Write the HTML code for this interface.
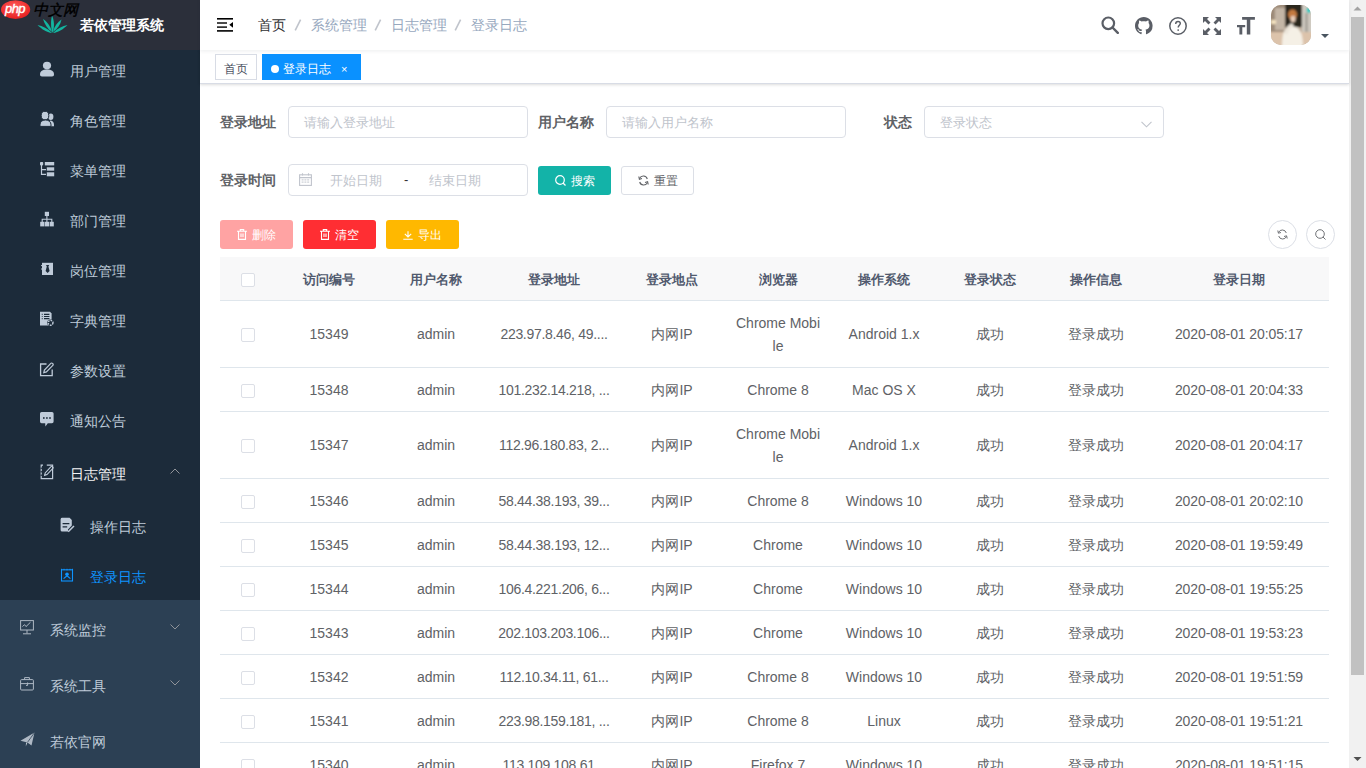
<!DOCTYPE html>
<html><head><meta charset="utf-8">
<style>
*{box-sizing:border-box;margin:0;padding:0}
html,body{width:1366px;height:768px;overflow:hidden;background:#fff;font-family:"Liberation Sans",sans-serif;}
.abs{position:absolute}
/* sidebar */
#side{position:absolute;left:0;top:0;width:200px;height:768px;background:#2c4054;overflow:hidden}
#sub{position:absolute;left:0;top:45px;width:200px;height:555px;background:#1c2b3a}
.mi{position:absolute;left:0;width:200px;color:#bfcbd9;font-size:14px;white-space:nowrap}
.mi .t{position:absolute;top:1px}
.mi svg{position:absolute}
#logo{position:absolute;left:0;top:0;width:200px;height:50px;background:#2b2f3a}
#logo .title{position:absolute;left:80px;top:0;line-height:50px;color:#fff;font-weight:bold;font-size:14px}
/* navbar */
#nav{position:absolute;z-index:2;left:200px;top:0;width:1149px;height:50px;background:#fff;box-shadow:0 1px 4px rgba(0,21,41,.08)}
.bc{position:absolute;top:0;line-height:50px;font-size:14px;color:#97a8be}
.sep{position:absolute;top:0;line-height:50px;font-size:14px;color:#c0c4cc;font-weight:bold}
#tags{position:absolute;z-index:1;left:200px;top:50px;width:1149px;height:34px;background:#fff;border-bottom:1px solid #d8dce5;box-shadow:0 1px 3px 0 rgba(0,0,0,.12),0 0 3px 0 rgba(0,0,0,.04)}
.tag{position:absolute;top:4px;height:26px;line-height:28px;border:1px solid #d8dce5;color:#495060;background:#fff;font-size:12px;padding:0 8px}
.tag.act{background:#0a91ff;border-color:#0a91ff;color:#fff}
/* form */
.lbl{position:absolute;font-size:14px;font-weight:bold;color:#606266;line-height:36px;white-space:nowrap}
.inp{position:absolute;height:32px;border:1px solid #dcdfe6;border-radius:4px;background:#fff;font-size:13px;color:#c0c4cc;line-height:32px;white-space:nowrap}
.btn{position:absolute;height:29px;border-radius:3px;font-size:12px;line-height:30px;white-space:nowrap;color:#fff}
/* table */
#tbl{position:absolute;left:220px;top:257px;width:1109px}
.row{position:absolute;left:0;width:1109px;border-bottom:1px solid #dfe6ec}
.hdr{background:#f8f8f9;color:#515a6e;font-size:13px;font-weight:bold}
.c{position:absolute;top:1px;text-align:center;font-size:14px;color:#606266;white-space:nowrap}
.hdr .c{color:#515a6e;font-size:13px}
.cb{position:absolute;width:14px;height:14px;border:1px solid #dcdfe6;border-radius:2px;background:#fff}
/* scrollbar */
#sb{position:absolute;left:1349px;top:0;width:17px;height:768px;background:#f1f1f1}
</style></head><body>

<div id="side">
  <div id="sub"></div>
<div class="mi" style="top:45px;height:50px;line-height:50px;color:#bfcbd9"><span class="t" style="left:70px">用户管理</span></div>
<div class="mi" style="top:95px;height:50px;line-height:50px;color:#bfcbd9"><span class="t" style="left:70px">角色管理</span></div>
<div class="mi" style="top:145px;height:50px;line-height:50px;color:#bfcbd9"><span class="t" style="left:70px">菜单管理</span></div>
<div class="mi" style="top:195px;height:50px;line-height:50px;color:#bfcbd9"><span class="t" style="left:70px">部门管理</span></div>
<div class="mi" style="top:245px;height:50px;line-height:50px;color:#bfcbd9"><span class="t" style="left:70px">岗位管理</span></div>
<div class="mi" style="top:295px;height:50px;line-height:50px;color:#bfcbd9"><span class="t" style="left:70px">字典管理</span></div>
<div class="mi" style="top:345px;height:50px;line-height:50px;color:#bfcbd9"><span class="t" style="left:70px">参数设置</span></div>
<div class="mi" style="top:395px;height:50px;line-height:50px;color:#bfcbd9"><span class="t" style="left:70px">通知公告</span></div>
<div class="mi" style="top:445px;height:56px;line-height:56px;color:#f4f4f5"><span class="t" style="left:70px">日志管理</span><svg style="left:170px;top:23px" width="10" height="6" viewBox="0 0 10 6"><path d="M0.5 5.5 L5 1 L9.5 5.5" stroke="#909399" stroke-width="1" fill="none"/></svg></div>
<div class="mi" style="top:501px;height:50px;line-height:50px;color:#bfcbd9"><span class="t" style="left:90px">操作日志</span></div>
<div class="mi" style="top:551px;height:50px;line-height:50px;color:#0e94ff"><span class="t" style="left:90px">登录日志</span></div>
<div class="mi" style="top:601px;height:56px;line-height:56px;color:#bfcbd9"><span class="t" style="left:50px">系统监控</span><svg style="left:170px;top:23px" width="10" height="6" viewBox="0 0 10 6"><path d="M0.5 0.5 L5 5 L9.5 0.5" stroke="#909399" stroke-width="1" fill="none"/></svg></div>
<div class="mi" style="top:657px;height:56px;line-height:56px;color:#bfcbd9"><span class="t" style="left:50px">系统工具</span><svg style="left:170px;top:23px" width="10" height="6" viewBox="0 0 10 6"><path d="M0.5 0.5 L5 5 L9.5 0.5" stroke="#909399" stroke-width="1" fill="none"/></svg></div>
<div class="mi" style="top:713px;height:56px;line-height:56px;color:#bfcbd9"><span class="t" style="left:50px">若依官网</span></div>
<svg class="abs" style="left:40px;top:61px" width="15" height="16" viewBox="0 0 15 16"><ellipse cx="7" cy="4.6" rx="4.1" ry="3.8" fill="#bfcbd9"/><path d="M0 13.6 C0 10.4 2.5 8.6 7 8.6 C11.5 8.6 14 10.4 14 13.6 C14 15 13.3 15.4 12 15.4 H2 C0.7 15.4 0 15 0 13.6 Z" fill="#bfcbd9"/></svg>
<svg class="abs" style="left:40px;top:111px" width="15" height="16" viewBox="0 0 15 16"><ellipse cx="10.8" cy="5.8" rx="2.6" ry="3.2" fill="#bfcbd9"/><path d="M10 9.6 C12.6 9.6 14 11.4 14 13.8 V15.2 H10 Z" fill="#bfcbd9"/><ellipse cx="5" cy="4.6" rx="3.8" ry="4.3" stroke="#1c2b3a" stroke-width="1" fill="#bfcbd9"/><path d="M0 13.8 C0 11 1.8 9 5.4 9 C9 9 11 11 11 13.8 V15.4 H0 Z" stroke="#1c2b3a" stroke-width="1" fill="#bfcbd9"/></svg>
<svg class="abs" style="left:40px;top:161px" width="15" height="16" viewBox="0 0 15 16"><rect x="0" y="1" width="3.2" height="3.4" rx="0.8" fill="#bfcbd9"/><path d="M1.5 4 V13.3 H6 M1.5 8.6 H6" stroke="#bfcbd9" stroke-width="1.2" fill="none"/><rect x="4.8" y="1" width="9.4" height="3.4" fill="#bfcbd9"/><rect x="6.8" y="6.3" width="7.4" height="3.4" fill="#bfcbd9"/><rect x="6.8" y="11.3" width="7.4" height="4" fill="#bfcbd9"/></svg>
<svg class="abs" style="left:40px;top:211px" width="15" height="16" viewBox="0 0 15 16"><rect x="4.8" y="0.8" width="4.2" height="4.2" fill="#bfcbd9"/><path d="M6.9 5 V8 M2.2 11 V8.2 H11.8 V11 M6.9 8 V11" stroke="#bfcbd9" stroke-width="1.1" fill="none"/><rect x="0.2" y="10.8" width="4.2" height="4.6" fill="#bfcbd9"/><rect x="4.8" y="10.8" width="4.2" height="4.6" fill="#bfcbd9"/><rect x="9.6" y="10.8" width="4.2" height="4.6" fill="#bfcbd9"/></svg>
<svg class="abs" style="left:40px;top:262px" width="15" height="15" viewBox="0 0 15 15"><rect x="2" y="0.8" width="11" height="12.2" fill="#bfcbd9"/><path d="M1 3.6 H3 M1 7 H3" stroke="#bfcbd9" stroke-width="1" /><path d="M6 3 H9.2 L8.4 4.6 L9.6 9 L7.6 11 L5.6 9 L6.8 4.6 Z" fill="#1c2b3a"/></svg>
<svg class="abs" style="left:39px;top:311px" width="16" height="16" viewBox="0 0 16 16"><path d="M1 0.8 H11 L12.6 2.4 V14.4 H1 Z" fill="#bfcbd9"/><path d="M2.8 3.4 H3.6 M5 3.4 H10.4 M2.8 5.5 H3.6 M5 5.5 H10.4 M2.8 7.6 H3.6 M5 7.6 H10.4" stroke="#1c2b3a" stroke-width="1.1"/><circle cx="11.6" cy="11.8" r="3.3" fill="#1c2b3a"/><circle cx="11.6" cy="11.8" r="2.4" fill="none" stroke="#bfcbd9" stroke-width="1.4" stroke-dasharray="1.6 0.9"/></svg>
<svg class="abs" style="left:39px;top:362px" width="16" height="16" viewBox="0 0 16 16"><path d="M7.5 2 H1.6 V13.6 H13.2 V7.6" stroke="#bfcbd9" stroke-width="1.3" fill="none"/><path d="M4.8 10.6 L5.4 8 L11.8 1.4 A1 1 0 0 1 13.4 1.4 L13.8 1.8 A1 1 0 0 1 13.8 3.4 L7.4 9.9 Z" stroke="#bfcbd9" stroke-width="1.2" fill="none"/></svg>
<svg class="abs" style="left:39px;top:411px" width="16" height="16" viewBox="0 0 16 16"><path d="M2.6 1 H13 A1.6 1.6 0 0 1 14.6 2.6 V10.6 A1.6 1.6 0 0 1 13 12.2 H8.8 L6.4 15.4 L6.2 12.2 H2.6 A1.6 1.6 0 0 1 1 10.6 V2.6 A1.6 1.6 0 0 1 2.6 1 Z" fill="#bfcbd9"/><rect x="4" y="6.2" width="1.6" height="1.6" fill="#1c2b3a"/><rect x="7.1" y="6.2" width="1.6" height="1.6" fill="#1c2b3a"/><rect x="10.2" y="6.2" width="1.6" height="1.6" fill="#1c2b3a"/></svg>
<svg class="abs" style="left:40px;top:464px" width="15" height="16" viewBox="0 0 15 16"><path d="M6.8 1.2 H12.6 V14.6 H1.2 V1.2 H3" stroke="#bfcbd9" stroke-width="1.2" fill="none"/><path d="M1.2 3.5 V5 M1.2 7 V8.5 M1.2 10.5 V12" stroke="#1c2b3a" stroke-width="1.2"/><path d="M4.6 11.4 L5.2 9 L11 2.6 A0.9 0.9 0 0 1 12.4 2.6 L12.8 3 A0.9 0.9 0 0 1 12.8 4.4 L7 10.6 Z" stroke="#bfcbd9" stroke-width="1.1" fill="none"/></svg>
<svg class="abs" style="left:60px;top:517px" width="15" height="16" viewBox="0 0 15 16"><path d="M0.6 2.2 A1.6 1.6 0 0 1 2.2 0.8 H9.6 L11.8 3 V8.6 L8 12.6 V14.6 H2.2 A1.6 1.6 0 0 1 0.6 13 Z" fill="#bfcbd9"/><path d="M2.6 6.6 H9.4 M2.6 9.8 H7.2" stroke="#1c2b3a" stroke-width="1.2"/><path d="M8.2 14.8 L14 9" stroke="#bfcbd9" stroke-width="1.5"/></svg>
<svg class="abs" style="left:60px;top:568px" width="14" height="14" viewBox="0 0 14 14"><rect x="1.5" y="1.8" width="11" height="11.2" stroke="#0e94ff" stroke-width="1.1" fill="none"/><path d="M1.5 0.8 V2 M4 0.8 V2.2 M7 0.8 V2.4 M10 0.8 V2.2 M12.5 0.8 V2" stroke="#0e94ff" stroke-width="1"/><circle cx="7" cy="6.2" r="1.8" fill="#0e94ff"/><path d="M3.6 10.6 L7 7.8 L10.4 10.6" stroke="#0e94ff" stroke-width="1.2" fill="none"/></svg>
<svg class="abs" style="left:20px;top:620px" width="14" height="15" viewBox="0 0 14 15"><rect x="0.6" y="0.6" width="12.8" height="9.4" stroke="#aeb8c4" stroke-width="1" fill="none"/><path d="M2.5 6.6 L4.5 4.6 L6 6.6 L10.5 2.2" stroke="#aeb8c4" stroke-width="1" fill="none"/><path d="M7 10 V13.4 M3 13.8 H11" stroke="#aeb8c4" stroke-width="1"/></svg>
<svg class="abs" style="left:20px;top:677px" width="14" height="14" viewBox="0 0 14 14"><rect x="0.6" y="2.6" width="12.8" height="10.4" rx="1" stroke="#aeb8c4" stroke-width="1" fill="none"/><path d="M4.6 2.6 V0.6 H9.4 V2.6 M0.6 6.6 H13.4" stroke="#aeb8c4" stroke-width="1" fill="none"/><path d="M7.6 5.5 V8.4 H6" stroke="#aeb8c4" stroke-width="1" fill="none"/></svg>
<svg class="abs" style="left:20px;top:732px" width="15" height="15" viewBox="0 0 15 15"><path d="M0.5 8.8 L14.5 0.6 L11.5 13.4 L7.4 10.4 Z" fill="#aeb8c4"/><path d="M14.5 0.6 L6 11.2 L5.8 14.6 L7.4 10.4 Z" fill="#ccd4dc"/><path d="M14.5 0.6 L7.4 10.4" stroke="#2c4054" stroke-width="0.8"/></svg>
<div id="logo">
    <svg class="abs" style="left:36px;top:14px" width="33" height="21" viewBox="0 0 33 21">
      <path d="M16.5 19 C14.5 13 14.8 6 16 1.5 C18.2 6 18.8 13 16.5 19 Z" fill="#13b5a0"/>
      <path d="M16 18 C11.5 15 8.5 10 7 5 C11 7.5 14.5 12 16 18 Z" fill="#13b5a0"/>
      <path d="M17 18 C21.5 15 24.5 10.5 25.5 5.5 C21.5 8 18.5 12 17 18 Z" fill="#13b5a0"/>
      <path d="M16 19 C10.5 18.5 5.5 15 1.5 11 C6.5 12 12 14.5 16 19 Z" fill="#13b5a0"/>
      <path d="M17 19 C22.5 18.5 27.5 15 31.5 11 C26.5 12 21 14.5 17 19 Z" fill="#13b5a0"/>
    </svg>
    <div class="title">若依管理系统</div>
  </div>
  <!-- watermark -->
  <svg class="abs" style="left:0;top:0" width="90" height="22" viewBox="0 0 90 22">
    <defs><radialGradient id="rg" cx="0.45" cy="0.35" r="0.7"><stop offset="0" stop-color="#ff5a5a"/><stop offset="1" stop-color="#e41b1b"/></radialGradient></defs>
    <ellipse cx="15.6" cy="9.6" rx="14.6" ry="9.4" fill="url(#rg)"/>
    <text x="15" y="13.3" text-anchor="middle" font-family="Liberation Sans" font-style="italic" font-size="13" stroke="#fff" stroke-width="0.4" fill="#fff" letter-spacing="-0.6">php</text>
  </svg>
  <div class="abs" style="left:33px;top:1px;font-size:15px;line-height:17px;color:#000;font-style:italic;-webkit-text-stroke:0.4px #000;white-space:nowrap;letter-spacing:0px">中文网</div>
</div>


<div id="nav">
  <svg class="abs" style="left:17px;top:18px" width="16" height="14" viewBox="0 0 16 14">
    <rect x="0" y="0" width="16" height="1.6" fill="#000"/>
    <rect x="0" y="4.3" width="10" height="1.4" fill="#000"/>
    <rect x="0" y="8.4" width="10" height="1.4" fill="#000"/>
    <path d="M16 3.9 V9.8 L12.3 6.85 Z" fill="#000"/>
    <rect x="0" y="12.1" width="16" height="1.6" fill="#000"/>
  </svg>
  <span class="bc" style="left:58px;color:#303133">首页</span>
  <svg class="abs" style="left:94px;top:19px" width="8" height="12" viewBox="0 0 8 12"><path d="M6.6 0.6 L1.2 11.4" stroke="#c0c4cc" stroke-width="1.6"/></svg>
  <span class="bc" style="left:111px">系统管理</span>
  <svg class="abs" style="left:174px;top:19px" width="8" height="12" viewBox="0 0 8 12"><path d="M6.6 0.6 L1.2 11.4" stroke="#c0c4cc" stroke-width="1.6"/></svg>
  <span class="bc" style="left:191px">日志管理</span>
  <svg class="abs" style="left:254px;top:19px" width="8" height="12" viewBox="0 0 8 12"><path d="M6.6 0.6 L1.2 11.4" stroke="#c0c4cc" stroke-width="1.6"/></svg>
  <span class="bc" style="left:271px">登录日志</span>
  <!-- right icons -->
  <svg class="abs" style="left:901px;top:16px" width="18" height="18" viewBox="0 0 18 18"><circle cx="7.3" cy="7.3" r="5.8" stroke="#5a5e66" stroke-width="2.2" fill="none"/><path d="M11.5 11.5 L16.8 16.8" stroke="#5a5e66" stroke-width="2.4" stroke-linecap="round"/></svg>
  <svg class="abs" style="left:935px;top:17px" width="17.6" height="17.6" viewBox="0 0 16 16"><path fill="#5a5e66" d="M8 0C3.58 0 0 3.58 0 8c0 3.54 2.29 6.53 5.47 7.59.4.07.55-.17.55-.38 0-.19-.01-.82-.01-1.49-2.01.37-2.53-.49-2.69-.94-.09-.23-.48-.94-.82-1.13-.28-.15-.68-.52-.01-.53.63-.01 1.08.58 1.23.82.72 1.21 1.87.87 2.33.66.07-.52.28-.87.51-1.07-1.78-.2-3.64-.89-3.64-3.95 0-.87.31-1.59.82-2.15-.08-.2-.36-1.02.08-2.12 0 0 .67-.21 2.2.82.64-.18 1.32-.27 2-.27.68 0 1.36.09 2 .27 1.53-1.04 2.2-.82 2.2-.82.44 1.1.16 1.92.08 2.12.51.56.82 1.27.82 2.15 0 3.07-1.87 3.75-3.65 3.95.29.25.54.73.54 1.48 0 1.07-.01 1.93-.01 2.2 0 .21.15.46.55.38A8.013 8.013 0 0016 8c0-4.42-3.58-8-8-8z"/></svg>
  <svg class="abs" style="left:969px;top:17px" width="18" height="18" viewBox="0 0 18 18"><circle cx="9" cy="9" r="8.2" stroke="#5a5e66" stroke-width="1.5" fill="none"/><path d="M6.7 6.9 C6.7 5.3 7.7 4.5 9 4.5 C10.4 4.5 11.3 5.4 11.3 6.6 C11.3 8.3 9.2 8.5 9.2 10.6" stroke="#5a5e66" stroke-width="1.4" fill="none"/><rect x="8.4" y="12.4" width="1.6" height="1.4" fill="#5a5e66"/></svg>
  <svg class="abs" style="left:1003px;top:17px" width="18" height="18" viewBox="0 0 18 18"><g fill="#5a5e66"><path d="M0 0 H6 L4 2 L7.5 5.5 L5.5 7.5 L2 4 L0 6 Z"/><path d="M18 0 V6 L16 4 L12.5 7.5 L10.5 5.5 L14 2 L12 0 Z"/><path d="M0 18 V12 L2 14 L5.5 10.5 L7.5 12.5 L4 16 L6 18 Z"/><path d="M18 18 H12 L14 16 L10.5 12.5 L12.5 10.5 L16 14 L18 12 Z"/></g></svg>
  <svg class="abs" style="left:1037px;top:17px" width="19" height="18" viewBox="0 0 19 18"><g fill="#5a5e66"><path d="M5.1 0 H17.9 V2.7 H13.3 V17.6 H9.8 V2.7 H5.1 Z"/><path d="M0 8 H8.2 V10.3 H5.3 V17.6 H2.4 V10.3 H0 Z"/></g></svg>
  <svg class="abs" style="left:1071px;top:5px" width="40" height="40" viewBox="0 0 40 40">
    <defs>
      <clipPath id="av"><rect x="0" y="0" width="40" height="40" rx="10"/></clipPath>
      <filter id="bl" x="-20%" y="-20%" width="140%" height="140%"><feGaussianBlur stdDeviation="0.8"/></filter>
    </defs>
    <g clip-path="url(#av)">
      <rect width="40" height="40" fill="#bfae9c"/>
      <g filter="url(#bl)">
      <rect x="-2" y="-2" width="18" height="30" fill="#9c8a78"/>
      <rect x="4" y="3" width="10" height="22" fill="#c4b6a6"/>
      <rect x="14" y="-2" width="18" height="24" fill="#2b251d"/>
      <rect x="31" y="-2" width="11" height="34" fill="#cfcac1"/>
      <rect x="34" y="8" width="3" height="22" fill="#a9a59c"/>
      <rect x="-2" y="27" width="44" height="16" fill="#dcc3ab"/>
      <rect x="0" y="15" width="5" height="4" fill="#f3e2c0"/>
      <rect x="20" y="9" width="3" height="3" fill="#8a8060"/>
      <ellipse cx="38" cy="5" rx="2.5" ry="3" fill="#2fc9c0"/>
      <path d="M11 42 C11 30 12 22 21 21 C30 22 32 30 32 42 Z" fill="#f5f0e6"/>
      <path d="M13 27 C15 22 18 19 21 18 L23 21 C19 23 17 26 16 30 Z" fill="#ece5da"/>
      <ellipse cx="21.5" cy="9.5" rx="4.4" ry="5" fill="#c47a40"/>
      <ellipse cx="22" cy="14" rx="2.6" ry="3.2" fill="#e8cdb8"/>
      </g>
    </g>
  </svg>
  <svg class="abs" style="left:1121px;top:34px" width="8" height="4" viewBox="0 0 8 4"><path d="M0 0 H8 L4 4 Z" fill="#4a5560"/></svg>
</div>
<div id="tags">
  <div class="tag" style="left:15px;width:42px;padding:0;text-align:center">首页</div>
  <div class="tag act" style="left:62px;width:99px;padding:0 0 0 8px"><span style="display:inline-block;width:8px;height:8px;border-radius:50%;background:#fff;margin-right:4px;vertical-align:0px"></span>登录日志<span style="margin-left:10px;font-size:11px;position:relative;top:0px">×</span></div>
</div>

<!-- form -->
<div class="lbl" style="left:220px;top:104px">登录地址</div>
<div class="inp" style="left:288px;top:106px;width:240px;padding-left:15px">请输入登录地址</div>
<div class="lbl" style="left:538px;top:104px">用户名称</div>
<div class="inp" style="left:606px;top:106px;width:240px;padding-left:15px">请输入用户名称</div>
<div class="lbl" style="left:884px;top:104px">状态</div>
<div class="inp" style="left:924px;top:106px;width:240px;padding-left:15px">登录状态<svg class="abs" style="left:216px;top:14px" width="11" height="7" viewBox="0 0 11 7"><path d="M0.5 0.8 L5.5 5.8 L10.5 0.8" stroke="#c0c4cc" stroke-width="1.1" fill="none"/></svg></div>

<div class="lbl" style="left:220px;top:162px">登录时间</div>
<div class="inp" style="left:288px;top:164px;width:240px">
  <svg class="abs" style="left:10px;top:8px" width="13" height="13" viewBox="0 0 13 13"><rect x="0.6" y="1.8" width="11.8" height="10.6" stroke="#c0c4cc" stroke-width="1.1" fill="none"/><path d="M0.6 4.6 H12.4 M3.5 0.3 V2.5 M9.5 0.3 V2.5" stroke="#c0c4cc" stroke-width="1.1"/><path d="M2.6 6.9 H10.4 M2.6 9.1 H10.4" stroke="#c0c4cc" stroke-width="1" stroke-dasharray="2 0.8"/></svg>
  <span class="abs" style="left:41px;top:0">开始日期</span>
  <span class="abs" style="left:115px;top:-1px;color:#303133">-</span>
  <span class="abs" style="left:140px;top:0">结束日期</span>
</div>
<div class="btn" style="left:538px;top:166px;width:73px;background:#13b3a8;text-align:center">
  <svg style="position:relative;top:1px;margin-right:5px" width="11" height="11" viewBox="0 0 11 11"><circle cx="5" cy="5" r="4.3" stroke="#fff" stroke-width="1.2" fill="none"/><path d="M8 8 L10.5 10.5" stroke="#fff" stroke-width="1.2"/></svg>搜索</div>
<div class="btn" style="left:621px;top:166px;width:73px;background:#fff;border:1px solid #dcdfe6;color:#606266;text-align:center;line-height:28px">
  <svg style="position:relative;top:1px;margin-right:5px" width="11" height="11" viewBox="0 0 11 11"><path d="M9.3 4 A4.1 4.1 0 0 0 1.6 3.4 M1.7 7 A4.1 4.1 0 0 0 9.4 7.6" stroke="#606266" stroke-width="1.1" fill="none"/><path d="M0.8 1.5 L1.4 4.2 L4 3.5 M10.2 9.5 L9.6 6.8 L7 7.5" stroke="#606266" stroke-width="1.1" fill="none"/></svg>重置</div>

<!-- toolbar -->
<div class="btn" style="left:220px;top:220px;width:73px;background:#ffa3a3;text-align:center">
  <svg style="position:relative;top:1px;margin-right:5px" width="10" height="11" viewBox="0 0 10 11"><path d="M0 2.2 H10 M3.3 2.2 V0.6 H6.7 V2.2 M1.5 2.2 V10.4 H8.5 V2.2 M4 4.5 V8 M6 4.5 V8" stroke="#fff" stroke-width="1.1" fill="none"/></svg>删除</div>
<div class="btn" style="left:303px;top:220px;width:73px;background:#ff2e33;text-align:center">
  <svg style="position:relative;top:1px;margin-right:5px" width="10" height="11" viewBox="0 0 10 11"><path d="M0 2.2 H10 M3.3 2.2 V0.6 H6.7 V2.2 M1.5 2.2 V10.4 H8.5 V2.2 M4 4.5 V8 M6 4.5 V8" stroke="#fff" stroke-width="1.1" fill="none"/></svg>清空</div>
<div class="btn" style="left:386px;top:220px;width:73px;background:#ffb800;text-align:center">
  <svg style="position:relative;top:1px;margin-right:5px" width="10" height="11" viewBox="0 0 10 11"><path d="M5 2.2 V7.8 M1.8 4.8 L5 8 L8.2 4.8 M0.3 10.2 H9.7" stroke="#fff" stroke-width="1.1" fill="none"/></svg>导出</div>
<div class="abs" style="left:1268px;top:220px;width:29px;height:29px;border:1px solid #dcdfe6;border-radius:50%">
  <svg class="abs" style="left:8px;top:8px" width="11" height="11" viewBox="0 0 11 11"><path d="M9.3 4 A4.1 4.1 0 0 0 1.6 3.4 M1.7 7 A4.1 4.1 0 0 0 9.4 7.6" stroke="#606266" stroke-width="0.9" fill="none"/><path d="M0.8 1.5 L1.4 4.2 L4 3.5 M10.2 9.5 L9.6 6.8 L7 7.5" stroke="#606266" stroke-width="0.9" fill="none"/></svg></div>
<div class="abs" style="left:1306px;top:220px;width:29px;height:29px;border:1px solid #dcdfe6;border-radius:50%">
  <svg class="abs" style="left:8px;top:8px" width="11" height="11" viewBox="0 0 11 11"><circle cx="5" cy="5" r="4.3" stroke="#606266" stroke-width="0.9" fill="none"/><path d="M8 8 L10.5 10.5" stroke="#606266" stroke-width="0.9"/></svg></div>

<div id="tbl">
<div class="row hdr" style="top:0;height:44px">
<div class="cb" style="left:21px;top:16px"></div>
<div class="c" style="left:55px;width:108.00px;line-height:43px">访问编号</div>
<div class="c" style="left:163px;width:106.00px;line-height:43px">用户名称</div>
<div class="c" style="left:269px;width:130.00px;line-height:43px">登录地址</div>
<div class="c" style="left:399px;width:106.00px;line-height:43px">登录地点</div>
<div class="c" style="left:505px;width:106.00px;line-height:43px">浏览器</div>
<div class="c" style="left:611px;width:106.00px;line-height:43px">操作系统</div>
<div class="c" style="left:717px;width:106.00px;line-height:43px">登录状态</div>
<div class="c" style="left:823px;width:106.00px;line-height:43px">操作信息</div>
<div class="c" style="left:929px;width:180.00px;line-height:43px">登录日期</div>
</div>
<div class="row" style="top:44px;height:67px">
<div class="cb" style="left:21px;top:27px"></div>
<div class="c" style="left:55px;width:108.00px;line-height:66px;top:0">15349</div>
<div class="c" style="left:163px;width:106.00px;line-height:66px;top:0">admin</div>
<div class="c" style="left:269px;width:130.00px;line-height:66px;top:0;letter-spacing:-0.3px">223.97.8.46, 49....</div>
<div class="c" style="left:399px;width:106.00px;line-height:66px;top:0">内网IP</div>
<div class="c" style="left:505px;width:106.00px;top:11px;line-height:23px">Chrome Mobi<br>le</div>
<div class="c" style="left:611px;width:106.00px;line-height:66px;top:0">Android 1.x</div>
<div class="c" style="left:717px;width:106.00px;line-height:66px;top:0">成功</div>
<div class="c" style="left:823px;width:106.00px;line-height:66px;top:0">登录成功</div>
<div class="c" style="left:929px;width:180.00px;line-height:66px;top:0;letter-spacing:-0.1px">2020-08-01 20:05:17</div>
</div>
<div class="row" style="top:111px;height:44px">
<div class="cb" style="left:21px;top:16px"></div>
<div class="c" style="left:55px;width:108.00px;line-height:43px">15348</div>
<div class="c" style="left:163px;width:106.00px;line-height:43px">admin</div>
<div class="c" style="left:269px;width:130.00px;line-height:43px;letter-spacing:-0.3px">101.232.14.218, ...</div>
<div class="c" style="left:399px;width:106.00px;line-height:43px">内网IP</div>
<div class="c" style="left:505px;width:106.00px;line-height:43px">Chrome 8</div>
<div class="c" style="left:611px;width:106.00px;line-height:43px">Mac OS X</div>
<div class="c" style="left:717px;width:106.00px;line-height:43px">成功</div>
<div class="c" style="left:823px;width:106.00px;line-height:43px">登录成功</div>
<div class="c" style="left:929px;width:180.00px;line-height:43px;letter-spacing:-0.1px">2020-08-01 20:04:33</div>
</div>
<div class="row" style="top:155px;height:67px">
<div class="cb" style="left:21px;top:27px"></div>
<div class="c" style="left:55px;width:108.00px;line-height:66px;top:0">15347</div>
<div class="c" style="left:163px;width:106.00px;line-height:66px;top:0">admin</div>
<div class="c" style="left:269px;width:130.00px;line-height:66px;top:0;letter-spacing:-0.3px">112.96.180.83, 2...</div>
<div class="c" style="left:399px;width:106.00px;line-height:66px;top:0">内网IP</div>
<div class="c" style="left:505px;width:106.00px;top:11px;line-height:23px">Chrome Mobi<br>le</div>
<div class="c" style="left:611px;width:106.00px;line-height:66px;top:0">Android 1.x</div>
<div class="c" style="left:717px;width:106.00px;line-height:66px;top:0">成功</div>
<div class="c" style="left:823px;width:106.00px;line-height:66px;top:0">登录成功</div>
<div class="c" style="left:929px;width:180.00px;line-height:66px;top:0;letter-spacing:-0.1px">2020-08-01 20:04:17</div>
</div>
<div class="row" style="top:222px;height:44px">
<div class="cb" style="left:21px;top:16px"></div>
<div class="c" style="left:55px;width:108.00px;line-height:43px">15346</div>
<div class="c" style="left:163px;width:106.00px;line-height:43px">admin</div>
<div class="c" style="left:269px;width:130.00px;line-height:43px;letter-spacing:-0.3px">58.44.38.193, 39...</div>
<div class="c" style="left:399px;width:106.00px;line-height:43px">内网IP</div>
<div class="c" style="left:505px;width:106.00px;line-height:43px">Chrome 8</div>
<div class="c" style="left:611px;width:106.00px;line-height:43px">Windows 10</div>
<div class="c" style="left:717px;width:106.00px;line-height:43px">成功</div>
<div class="c" style="left:823px;width:106.00px;line-height:43px">登录成功</div>
<div class="c" style="left:929px;width:180.00px;line-height:43px;letter-spacing:-0.1px">2020-08-01 20:02:10</div>
</div>
<div class="row" style="top:266px;height:44px">
<div class="cb" style="left:21px;top:16px"></div>
<div class="c" style="left:55px;width:108.00px;line-height:43px">15345</div>
<div class="c" style="left:163px;width:106.00px;line-height:43px">admin</div>
<div class="c" style="left:269px;width:130.00px;line-height:43px;letter-spacing:-0.3px">58.44.38.193, 12...</div>
<div class="c" style="left:399px;width:106.00px;line-height:43px">内网IP</div>
<div class="c" style="left:505px;width:106.00px;line-height:43px">Chrome</div>
<div class="c" style="left:611px;width:106.00px;line-height:43px">Windows 10</div>
<div class="c" style="left:717px;width:106.00px;line-height:43px">成功</div>
<div class="c" style="left:823px;width:106.00px;line-height:43px">登录成功</div>
<div class="c" style="left:929px;width:180.00px;line-height:43px;letter-spacing:-0.1px">2020-08-01 19:59:49</div>
</div>
<div class="row" style="top:310px;height:44px">
<div class="cb" style="left:21px;top:16px"></div>
<div class="c" style="left:55px;width:108.00px;line-height:43px">15344</div>
<div class="c" style="left:163px;width:106.00px;line-height:43px">admin</div>
<div class="c" style="left:269px;width:130.00px;line-height:43px;letter-spacing:-0.3px">106.4.221.206, 6...</div>
<div class="c" style="left:399px;width:106.00px;line-height:43px">内网IP</div>
<div class="c" style="left:505px;width:106.00px;line-height:43px">Chrome</div>
<div class="c" style="left:611px;width:106.00px;line-height:43px">Windows 10</div>
<div class="c" style="left:717px;width:106.00px;line-height:43px">成功</div>
<div class="c" style="left:823px;width:106.00px;line-height:43px">登录成功</div>
<div class="c" style="left:929px;width:180.00px;line-height:43px;letter-spacing:-0.1px">2020-08-01 19:55:25</div>
</div>
<div class="row" style="top:354px;height:44px">
<div class="cb" style="left:21px;top:16px"></div>
<div class="c" style="left:55px;width:108.00px;line-height:43px">15343</div>
<div class="c" style="left:163px;width:106.00px;line-height:43px">admin</div>
<div class="c" style="left:269px;width:130.00px;line-height:43px;letter-spacing:-0.3px">202.103.203.106...</div>
<div class="c" style="left:399px;width:106.00px;line-height:43px">内网IP</div>
<div class="c" style="left:505px;width:106.00px;line-height:43px">Chrome</div>
<div class="c" style="left:611px;width:106.00px;line-height:43px">Windows 10</div>
<div class="c" style="left:717px;width:106.00px;line-height:43px">成功</div>
<div class="c" style="left:823px;width:106.00px;line-height:43px">登录成功</div>
<div class="c" style="left:929px;width:180.00px;line-height:43px;letter-spacing:-0.1px">2020-08-01 19:53:23</div>
</div>
<div class="row" style="top:398px;height:44px">
<div class="cb" style="left:21px;top:16px"></div>
<div class="c" style="left:55px;width:108.00px;line-height:43px">15342</div>
<div class="c" style="left:163px;width:106.00px;line-height:43px">admin</div>
<div class="c" style="left:269px;width:130.00px;line-height:43px;letter-spacing:-0.3px">112.10.34.11, 61...</div>
<div class="c" style="left:399px;width:106.00px;line-height:43px">内网IP</div>
<div class="c" style="left:505px;width:106.00px;line-height:43px">Chrome 8</div>
<div class="c" style="left:611px;width:106.00px;line-height:43px">Windows 10</div>
<div class="c" style="left:717px;width:106.00px;line-height:43px">成功</div>
<div class="c" style="left:823px;width:106.00px;line-height:43px">登录成功</div>
<div class="c" style="left:929px;width:180.00px;line-height:43px;letter-spacing:-0.1px">2020-08-01 19:51:59</div>
</div>
<div class="row" style="top:442px;height:44px">
<div class="cb" style="left:21px;top:16px"></div>
<div class="c" style="left:55px;width:108.00px;line-height:43px">15341</div>
<div class="c" style="left:163px;width:106.00px;line-height:43px">admin</div>
<div class="c" style="left:269px;width:130.00px;line-height:43px;letter-spacing:-0.3px">223.98.159.181, ...</div>
<div class="c" style="left:399px;width:106.00px;line-height:43px">内网IP</div>
<div class="c" style="left:505px;width:106.00px;line-height:43px">Chrome 8</div>
<div class="c" style="left:611px;width:106.00px;line-height:43px">Linux</div>
<div class="c" style="left:717px;width:106.00px;line-height:43px">成功</div>
<div class="c" style="left:823px;width:106.00px;line-height:43px">登录成功</div>
<div class="c" style="left:929px;width:180.00px;line-height:43px;letter-spacing:-0.1px">2020-08-01 19:51:21</div>
</div>
<div class="row" style="top:486px;height:44px">
<div class="cb" style="left:21px;top:16px"></div>
<div class="c" style="left:55px;width:108.00px;line-height:43px">15340</div>
<div class="c" style="left:163px;width:106.00px;line-height:43px">admin</div>
<div class="c" style="left:269px;width:130.00px;line-height:43px;letter-spacing:-0.3px">113.109.108.61...</div>
<div class="c" style="left:399px;width:106.00px;line-height:43px">内网IP</div>
<div class="c" style="left:505px;width:106.00px;line-height:43px">Firefox 7</div>
<div class="c" style="left:611px;width:106.00px;line-height:43px">Windows 10</div>
<div class="c" style="left:717px;width:106.00px;line-height:43px">成功</div>
<div class="c" style="left:823px;width:106.00px;line-height:43px">登录成功</div>
<div class="c" style="left:929px;width:180.00px;line-height:43px;letter-spacing:-0.1px">2020-08-01 19:51:15</div>
</div>
</div>

<div id="sb">
  <svg class="abs" style="left:0;top:0" width="17" height="17" viewBox="0 0 17 17"><path d="M4.5 10.5 L8.5 6.5 L12.5 10.5 Z" fill="#a3a3a3"/></svg>
  <div class="abs" style="left:2px;top:17px;width:13px;height:658px;background:#c1c1c1"></div>
  <svg class="abs" style="left:0;top:751px" width="17" height="17" viewBox="0 0 17 17"><path d="M4.5 6 L8.5 10 L12.5 6 Z" fill="#505050"/></svg>
</div>
</body></html>
